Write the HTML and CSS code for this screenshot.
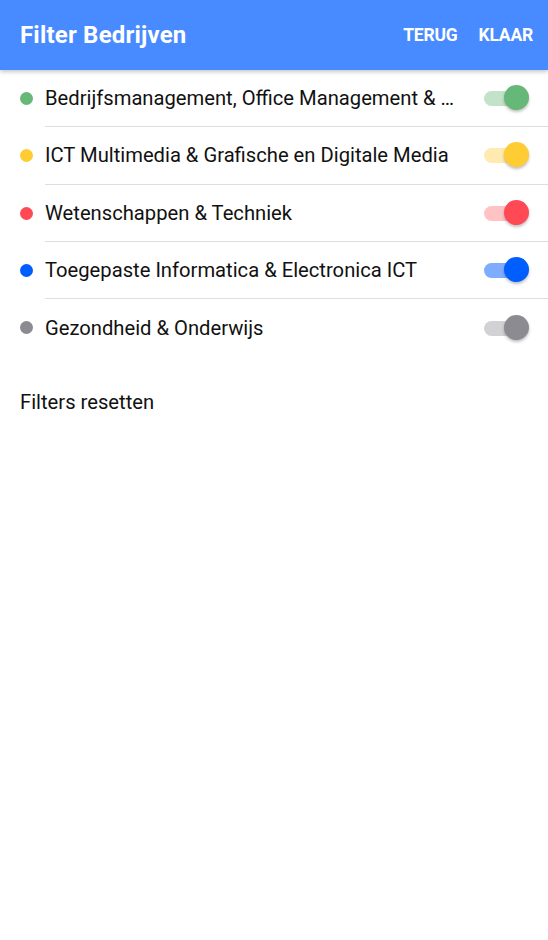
FILE: index.html
```html
<!DOCTYPE html>
<html>
<head>
<meta charset="utf-8">
<link rel="stylesheet" href="styles.css">
</head>
<body>
<header class="toolbar">
  <h1 class="title">Filter Bedrijven</h1>
  <div class="actions">
    <span class="btn">TERUG</span>
    <span class="btn">KLAAR</span>
  </div>
</header>
<ul class="list">
  <li class="item green">
    <span class="dot"></span>
    <div class="inner">
      <span class="label">Bedrijfsmanagement, Office Management &amp; Marketing</span>
      <span class="toggle"><span class="track"></span><span class="thumb"></span></span>
    </div>
  </li>
  <li class="item yellow">
    <span class="dot"></span>
    <div class="inner">
      <span class="label">ICT Multimedia &amp; Grafische en Digitale Media</span>
      <span class="toggle"><span class="track"></span><span class="thumb"></span></span>
    </div>
  </li>
  <li class="item red">
    <span class="dot"></span>
    <div class="inner">
      <span class="label">Wetenschappen &amp; Techniek</span>
      <span class="toggle"><span class="track"></span><span class="thumb"></span></span>
    </div>
  </li>
  <li class="item blue">
    <span class="dot"></span>
    <div class="inner">
      <span class="label">Toegepaste Informatica &amp; Electronica ICT</span>
      <span class="toggle"><span class="track"></span><span class="thumb"></span></span>
    </div>
  </li>
  <li class="item grey last">
    <span class="dot"></span>
    <div class="inner">
      <span class="label">Gezondheid &amp; Onderwijs</span>
      <span class="toggle"><span class="track"></span><span class="thumb"></span></span>
    </div>
  </li>
</ul>
<div class="reset">Filters resetten</div>
</body>
</html>
```

FILE: styles.css
```css
* { box-sizing: border-box; }
html, body { margin: 0; padding: 0; background: #fff; }
body { font-family: Roboto, "Noto Sans", sans-serif; color: #000; }

.toolbar {
  height: 70px;
  background: #488aff;
  color: #fff;
  display: flex;
  align-items: center;
  justify-content: space-between;
  padding: 0 15px 0 20px;
  box-shadow: 0 2px 4px rgba(0,0,0,0.22);
  position: relative;
  z-index: 1;
}
.title {
  margin: 0;
  font-size: 24px;
  font-weight: 700;
  letter-spacing: 0.2px;
}
.actions { display: flex; gap: 21px; }
.btn {
  font-size: 17.5px;
  font-weight: 700;
  letter-spacing: -0.2px;
}

.list { list-style: none; margin: 0; padding: 0; }
.item {
  display: flex;
  align-items: stretch;
  padding-left: 20px;
  height: 57.3px;
}
.dot {
  width: 13px;
  height: 13px;
  border-radius: 50%;
  flex: none;
  align-self: center;
  margin-right: 12px;
}
.inner {
  flex: 1;
  min-width: 0;
  display: flex;
  align-items: center;
  border-bottom: 1px solid #dedede;
  padding-right: 19px;
}
.item.last .inner { border-bottom: none; }
.label {
  flex: 1;
  min-width: 0;
  font-size: 20.2px;
  color: #111;
  white-space: nowrap;
  overflow: hidden;
  text-overflow: ellipsis;
  padding-right: 22px;
}
.toggle {
  position: relative;
  width: 45px;
  height: 26px;
  flex: none;
}
.track {
  position: absolute;
  left: 0;
  top: 6px;
  width: 36px;
  height: 15px;
  border-radius: 8px;
}
.thumb {
  position: absolute;
  right: 0;
  top: 0;
  width: 25px;
  height: 25px;
  border-radius: 50%;
  box-shadow: 0 2px 3px rgba(0,0,0,0.25);
}

.green .dot, .green .thumb { background: #66b879; }
.green .track { background: #c2e3c9; }
.yellow .dot, .yellow .thumb { background: #ffcc33; }
.yellow .track { background: #ffebaf; }
.red .dot, .red .thumb { background: #ff4a55; }
.red .track { background: #ffc3c6; }
.blue .dot, .blue .thumb { background: #005eff; }
.blue .track { background: #7eadff; }
.grey .dot, .grey .thumb { background: #8c8b91; }
.grey .track { background: #d2d2d4; }

.reset {
  padding: 0 20px;
  margin-top: 34px;
  font-size: 20.2px;
  color: #111;
}
```
